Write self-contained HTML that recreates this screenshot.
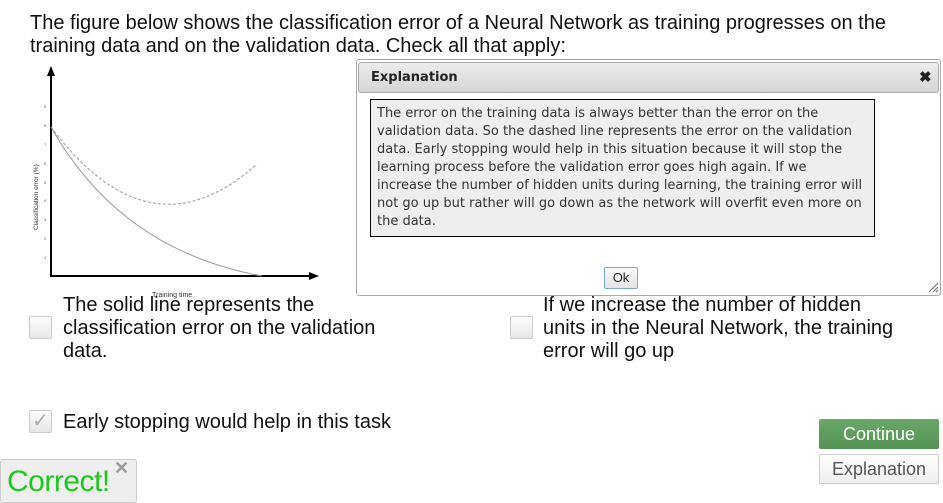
<!DOCTYPE html>
<html><head><style>
body{margin:0;width:943px;height:499px;overflow:hidden;background:#fff;font-family:"Liberation Sans",sans-serif;position:relative}
.a{position:absolute}
.t{font-size:20px;line-height:23px;color:#111}
.cb{position:absolute;width:21px;height:21px;border:1px solid #ccc;border-radius:2px;background:linear-gradient(#fdfdfd,#e6e6e6)}
</style></head><body>
<div class="a t" style="left:30px;top:12px;width:900px">The figure below shows the classification error of a Neural Network as training progresses on the training data and on the validation data. Check all that apply:</div>
<svg class="a" style="left:0;top:60px" width="360" height="250">
<line x1="51" y1="10" x2="51" y2="217" stroke="#000" stroke-width="2"/>
<polygon points="51,6 47,16 55,16" fill="#000"/>
<line x1="50" y1="216" x2="312" y2="216" stroke="#000" stroke-width="2"/>
<polygon points="319,216 309,212 309,220" fill="#000"/>
<path d="M51,67 Q120,190 262,216" fill="none" stroke="#999" stroke-width="1"/>
<path d="M51,67 Q150,200 257,104" fill="none" stroke="#999" stroke-width="1" stroke-dasharray="3,2"/>
<g font-size="4" fill="#555" font-family="Liberation Sans"><text x="44" y="48">9</text><text x="44" y="67">8</text><text x="44" y="86">7</text><text x="44" y="105">6</text><text x="44" y="124">5</text><text x="44" y="142">4</text><text x="44" y="161">3</text><text x="44" y="180">2</text><text x="44" y="199">1</text></g>
<text transform="translate(38,170) rotate(-90)" font-size="6.5" fill="#333">Classification error (%)</text>
<text x="152" y="237" font-size="7" fill="#333">Training time</text>
</svg>
<div class="cb" style="left:29px;top:316px"></div>
<div class="a t" style="left:63px;top:294px;width:330px">The solid line represents the classification error on the validation data.</div>
<div class="cb" style="left:510px;top:316px"></div>
<div class="a t" style="left:543px;top:294px;width:355px">If we increase the number of hidden units in the Neural Network, the training error will go up</div>
<div class="cb" style="left:29px;top:410px;color:#aaa;font-size:20px;line-height:21px;text-align:center">✓</div>
<div class="a t" style="left:63px;top:411px">Early stopping would help in this task</div>
<div class="a" style="left:819px;top:419px;width:120px;height:30px;background:linear-gradient(#6aa86a,#559355);border-radius:2px;color:#fff;font-size:18px;line-height:30px;text-align:center">Continue</div>
<div class="a" style="left:819px;top:454px;width:118px;height:28px;border:1px solid #ccc;background:linear-gradient(#fff,#eee);border-radius:2px;color:#555;font-size:18px;line-height:28px;text-align:center">Explanation</div>
<div class="a" style="left:0;top:459px;width:135px;height:42px;border:1px solid #ccc;background:#eee;border-radius:3px"></div>
<div class="a" style="left:7px;top:465px;color:#1ec81e;font-size:30px;line-height:34px;letter-spacing:-0.5px">Correct!</div>
<div class="a" style="left:114px;top:458px;color:#999;font-size:18px;font-weight:bold">✕</div>
<div class="a" style="left:356px;top:59px;width:583px;height:235px;border:1px solid #aaa;border-radius:3px;background:#fff"></div>
<div class="a" style="left:358px;top:62px;width:579px;height:29px;border:1px solid #aaa;border-radius:3px;background:linear-gradient(#ececec,#d6d6d6)"></div>
<div class="a" style="left:371px;top:70px;font-family:'DejaVu Sans',sans-serif;font-weight:bold;font-size:13px;color:#222">Explanation</div>
<div class="a" style="left:919px;top:68px;font-size:15px;font-weight:bold;color:#222">✖</div>
<div class="a" style="left:370px;top:99px;width:487px;height:118px;padding:5px 10px 13px 6px;border:1px solid #000;background:#eee;font-family:'DejaVu Sans',sans-serif;font-size:13px;line-height:18px;color:#333">The error on the training data is always better than the error on the validation data. So the dashed line represents the error on the validation data. Early stopping would help in this situation because it will stop the learning process before the validation error goes high again. If we increase the number of hidden units during learning, the training error will not go up but rather will go down as the network will overfit even more on the data.</div>
<div class="a" style="left:604px;top:267px;width:32px;height:20px;border:1px solid #7aa7dd;border-radius:2px;background:linear-gradient(#fafafa,#e4e4e4);font-size:13px;line-height:20px;text-align:center;color:#222">Ok</div>
<svg class="a" style="left:927px;top:281px" width="12" height="12"><path d="M11,2 L2,11 M11,6 L6,11 M11,9 L9,11" stroke="#666"/></svg>
</body></html>
